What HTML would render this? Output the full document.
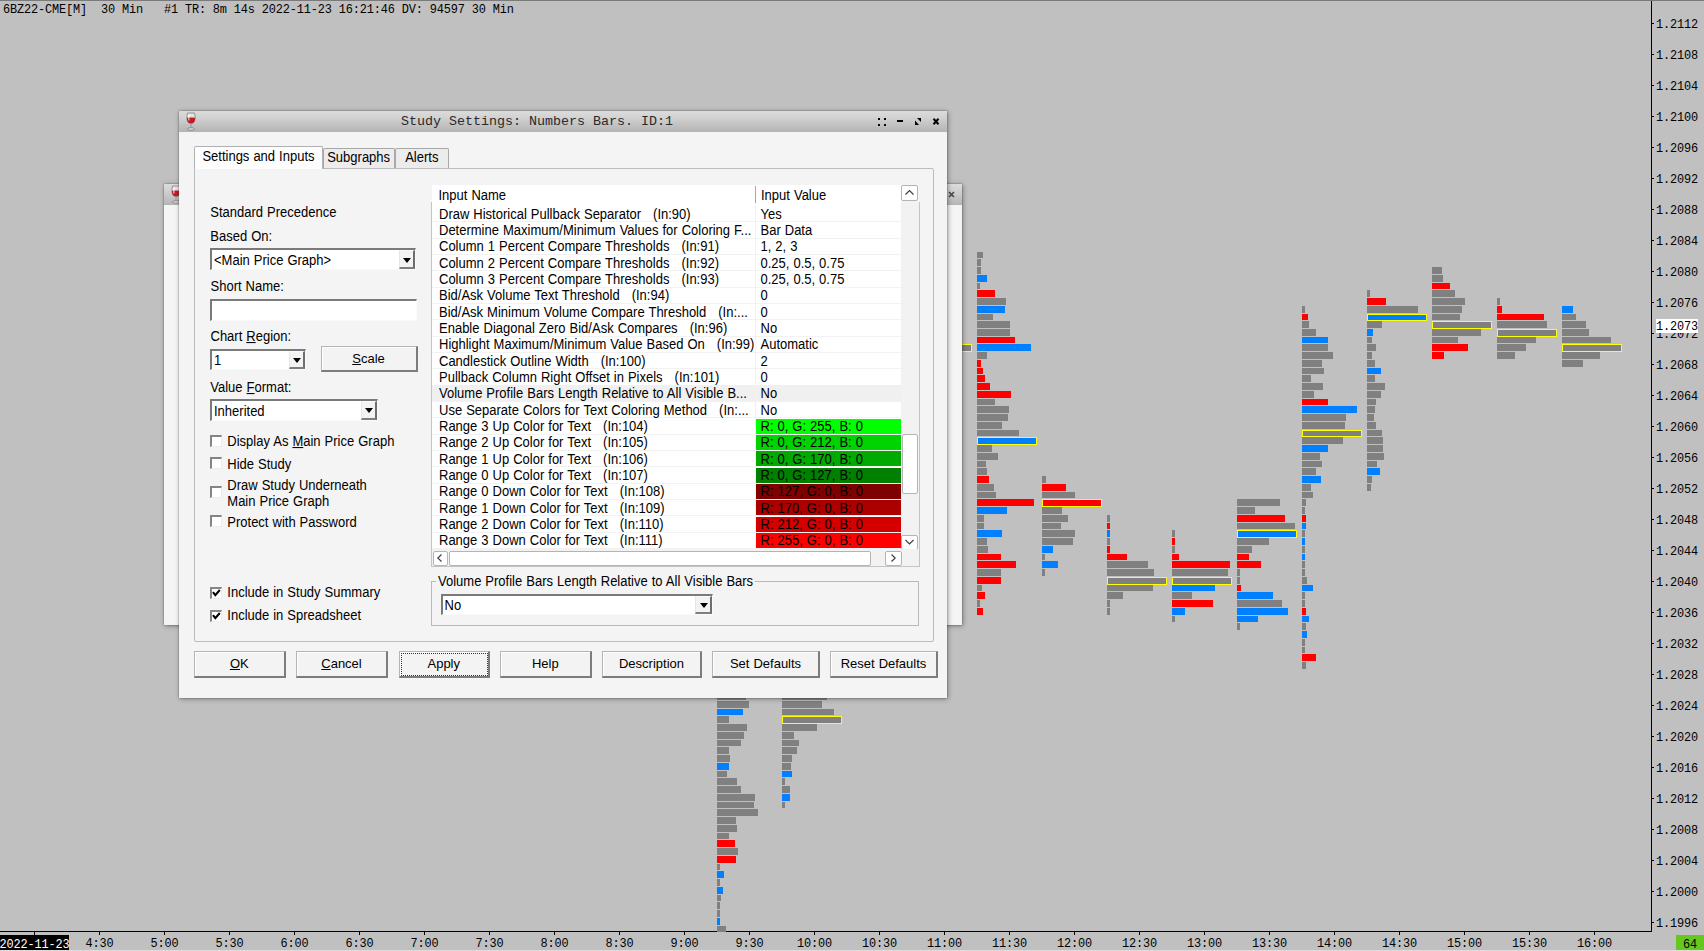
<!DOCTYPE html><html><head><meta charset="utf-8"><style>
*{margin:0;padding:0;box-sizing:border-box}
html,body{width:1704px;height:951px;overflow:hidden;background:#c0c0c0;position:relative}
body{font-family:"Liberation Sans",sans-serif;font-size:13px;color:#000;word-spacing:0.4px}
.mono,.status,.pl,.tl{word-spacing:0}
.a{position:absolute}
.mono{font-family:"Liberation Mono",monospace}
.status{position:absolute;left:3px;top:3px;font-family:"Liberation Mono",monospace;font-size:11.9px;letter-spacing:-0.14px;line-height:14px;white-space:pre;color:#000}
.vax{position:absolute;left:1651px;top:1px;width:1px;height:931px;background:#000}
.hax{position:absolute;left:0;top:931px;width:1652px;height:1px;background:#000}
.tk{position:absolute;left:1652px;width:2px;height:1px;background:#000}
.pl{position:absolute;left:1656px;font-family:"Liberation Mono",monospace;font-size:11.9px;letter-spacing:-0.14px;line-height:14px;white-space:pre;color:#000}
.bt{position:absolute;top:932px;width:1px;height:3px;background:#000}
.tl{position:absolute;top:937px;width:60px;text-align:center;font-family:"Liberation Mono",monospace;font-size:11.9px;letter-spacing:-0.14px;line-height:14px;color:#000}
.bar{position:absolute;height:6px}
.g{background:#808080}.r{background:#ff0000}.b{background:#0080ff}
.y{border:1px solid #ffff00}
/* dialog */
.win{position:absolute;background:#f4f4f4;box-shadow:0 0 1.5px rgba(0,0,0,.45),1px 1px 5px rgba(0,0,0,.35)}
.tbar{position:absolute;left:0;top:0;right:0;height:21px;background:linear-gradient(#dcdcdc,#d2d2d2 30%,#b4b4b4)}
.ttl{position:absolute;left:0;right:0;top:2px;text-align:center;font-family:"Liberation Mono",monospace;font-size:13.33px;line-height:16px;color:#333;white-space:pre}
.tab{position:absolute;border:1px solid #a8a8a8;border-bottom:none;border-radius:2px 2px 0 0;background:#ececec;line-height:16px;text-align:center;white-space:nowrap}
.panel{position:absolute;border:1px solid #bcbcbc;border-radius:0 2px 2px 2px;background:#f4f4f4}
.lbl{position:absolute;white-space:nowrap;line-height:16px;transform:scaleY(1.06);transform-origin:0 12.5px}
.combo{position:absolute;background:#fff;border-top:2px solid #7a7a7a;border-left:2px solid #7a7a7a;border-right:1px solid #fafafa;border-bottom:1px solid #fafafa}
.combo .txt{position:absolute;left:2px;top:0;line-height:18px;white-space:nowrap}
.dd{position:absolute;top:0;bottom:0;right:0;width:16px;background:#f0f0f0;border-left:1px solid #a0a0a0;border-bottom:1px solid #808080}
.dd:after{content:"";position:absolute;left:4px;top:8px;border-left:4px solid transparent;border-right:4px solid transparent;border-top:5px solid #000}
.edit{position:absolute;background:#fff;border:1px solid #bbb;border-top:2px solid #707070;border-left:2px solid #707070}
.btn{position:absolute;background:#f3f3f3;border:1px solid #b4b4b4;border-right:2px solid #7c7c7c;border-bottom:2px solid #7c7c7c;box-shadow:inset 1px 1px 0 #fff;text-align:center;white-space:nowrap}
.chk{position:absolute;width:12px;height:12px;background:#fff;border-top:2px solid #858585;border-left:2px solid #858585;border-right:1px solid #ececec;border-bottom:1px solid #ececec}
.list{position:absolute;background:#fff}
.row{position:absolute;left:0;height:16.33px;white-space:nowrap;border-bottom:1px solid #f2f2f2}
.row .n{position:absolute;left:7px;top:0;line-height:16px}
.row .v{position:absolute;left:329px;top:0;line-height:16px}
.cell{position:absolute;left:325px;width:146px;top:0;height:15.33px}
u{text-decoration:underline}
.ddb{position:absolute;background:#f3f3f3;border-left:1px solid #e6e6e6;border-top:1px solid #fafafa;border-right:2px solid #6e6e6e;border-bottom:2px solid #7e7e7e}
.arr{position:absolute;width:0;height:0;border-left:4px solid transparent;border-right:4px solid transparent;border-top:5px solid #000}
.sbb{position:absolute;background:#fff;border:1px solid #b4b4b4;border-radius:2px}

</style></head><body>
<div class="a" style="left:0;top:0;width:1704px;height:1px;background:#7a7a7a"></div>
<div class="status">6BZ22-CME[M]  30 Min   #1 TR: 8m 14s 2022-11-23 16:21:46 DV: 94597 30 Min</div>
<div class="vax"></div><div class="hax"></div>
<div class="tk" style="top:22.8px"></div><div class="pl" style="top:17.8px">1.2112</div>
<div class="tk" style="top:53.8px"></div><div class="pl" style="top:48.8px">1.2108</div>
<div class="tk" style="top:84.8px"></div><div class="pl" style="top:79.8px">1.2104</div>
<div class="tk" style="top:115.8px"></div><div class="pl" style="top:110.8px">1.2100</div>
<div class="tk" style="top:146.8px"></div><div class="pl" style="top:141.8px">1.2096</div>
<div class="tk" style="top:177.8px"></div><div class="pl" style="top:172.8px">1.2092</div>
<div class="tk" style="top:208.7px"></div><div class="pl" style="top:203.7px">1.2088</div>
<div class="tk" style="top:239.7px"></div><div class="pl" style="top:234.7px">1.2084</div>
<div class="tk" style="top:270.7px"></div><div class="pl" style="top:265.7px">1.2080</div>
<div class="tk" style="top:301.7px"></div><div class="pl" style="top:296.7px">1.2076</div>
<div class="tk" style="top:332.7px"></div><div class="pl" style="top:327.7px">1.2072</div>
<div class="tk" style="top:363.7px"></div><div class="pl" style="top:358.7px">1.2068</div>
<div class="tk" style="top:394.7px"></div><div class="pl" style="top:389.7px">1.2064</div>
<div class="tk" style="top:425.7px"></div><div class="pl" style="top:420.7px">1.2060</div>
<div class="tk" style="top:456.7px"></div><div class="pl" style="top:451.7px">1.2056</div>
<div class="tk" style="top:487.6px"></div><div class="pl" style="top:482.6px">1.2052</div>
<div class="tk" style="top:518.6px"></div><div class="pl" style="top:513.6px">1.2048</div>
<div class="tk" style="top:549.6px"></div><div class="pl" style="top:544.6px">1.2044</div>
<div class="tk" style="top:580.6px"></div><div class="pl" style="top:575.6px">1.2040</div>
<div class="tk" style="top:611.6px"></div><div class="pl" style="top:606.6px">1.2036</div>
<div class="tk" style="top:642.6px"></div><div class="pl" style="top:637.6px">1.2032</div>
<div class="tk" style="top:673.6px"></div><div class="pl" style="top:668.6px">1.2028</div>
<div class="tk" style="top:704.6px"></div><div class="pl" style="top:699.6px">1.2024</div>
<div class="tk" style="top:735.6px"></div><div class="pl" style="top:730.6px">1.2020</div>
<div class="tk" style="top:766.6px"></div><div class="pl" style="top:761.6px">1.2016</div>
<div class="tk" style="top:797.5px"></div><div class="pl" style="top:792.5px">1.2012</div>
<div class="tk" style="top:828.5px"></div><div class="pl" style="top:823.5px">1.2008</div>
<div class="tk" style="top:859.5px"></div><div class="pl" style="top:854.5px">1.2004</div>
<div class="tk" style="top:890.5px"></div><div class="pl" style="top:885.5px">1.2000</div>
<div class="tk" style="top:921.5px"></div><div class="pl" style="top:916.5px">1.1996</div>
<div class="bt" style="left:34px"></div>
<div class="bt" style="left:99.0px"></div><div class="tl" style="left:69.5px">4:30</div>
<div class="bt" style="left:164.0px"></div><div class="tl" style="left:134.5px">5:00</div>
<div class="bt" style="left:229.0px"></div><div class="tl" style="left:199.5px">5:30</div>
<div class="bt" style="left:294.0px"></div><div class="tl" style="left:264.5px">6:00</div>
<div class="bt" style="left:359.0px"></div><div class="tl" style="left:329.5px">6:30</div>
<div class="bt" style="left:424.0px"></div><div class="tl" style="left:394.5px">7:00</div>
<div class="bt" style="left:489.0px"></div><div class="tl" style="left:459.5px">7:30</div>
<div class="bt" style="left:554.0px"></div><div class="tl" style="left:524.5px">8:00</div>
<div class="bt" style="left:619.0px"></div><div class="tl" style="left:589.5px">8:30</div>
<div class="bt" style="left:684.0px"></div><div class="tl" style="left:654.5px">9:00</div>
<div class="bt" style="left:749.0px"></div><div class="tl" style="left:719.5px">9:30</div>
<div class="bt" style="left:814.0px"></div><div class="tl" style="left:784.5px">10:00</div>
<div class="bt" style="left:879.0px"></div><div class="tl" style="left:849.5px">10:30</div>
<div class="bt" style="left:944.0px"></div><div class="tl" style="left:914.5px">11:00</div>
<div class="bt" style="left:1009.0px"></div><div class="tl" style="left:979.5px">11:30</div>
<div class="bt" style="left:1074.0px"></div><div class="tl" style="left:1044.5px">12:00</div>
<div class="bt" style="left:1139.0px"></div><div class="tl" style="left:1109.5px">12:30</div>
<div class="bt" style="left:1204.0px"></div><div class="tl" style="left:1174.5px">13:00</div>
<div class="bt" style="left:1269.0px"></div><div class="tl" style="left:1239.5px">13:30</div>
<div class="bt" style="left:1334.0px"></div><div class="tl" style="left:1304.5px">14:00</div>
<div class="bt" style="left:1399.0px"></div><div class="tl" style="left:1369.5px">14:30</div>
<div class="bt" style="left:1464.0px"></div><div class="tl" style="left:1434.5px">15:00</div>
<div class="bt" style="left:1529.0px"></div><div class="tl" style="left:1499.5px">15:30</div>
<div class="bt" style="left:1594.0px"></div><div class="tl" style="left:1564.5px">16:00</div>
<div class="a" style="left:0;top:935px;width:69px;height:14.5px;background:#000"></div><div class="a mono" style="left:-0.5px;top:937.5px;color:#fff;font-size:11.9px;letter-spacing:-0.14px;line-height:14px;white-space:pre">2022-11-23</div>
<div class="a" style="left:1656px;top:319px;width:42px;height:14px;background:#fff"></div><div class="a mono" style="left:1656px;top:320px;font-size:11.9px;letter-spacing:-0.14px;line-height:14px">1.2073</div>
<div class="a" style="left:1676px;top:935px;width:28px;height:14.5px;background:#66c81e"></div><div class="a mono" style="left:1676px;top:937.5px;width:28px;font-size:11.9px;letter-spacing:-0.14px;line-height:14px;text-align:center">64</div>
<div class="a" style="left:0;top:950px;width:1704px;height:1px;background:#dcdcdc"></div>
<div class="bar g" style="left:977px;top:252px;width:6px;height:6px"></div>
<div class="bar g" style="left:977px;top:259px;width:4px;height:7px"></div>
<div class="bar g" style="left:977px;top:267px;width:4px;height:7px"></div>
<div class="bar b" style="left:977px;top:275px;width:10px;height:7px"></div>
<div class="bar g" style="left:977px;top:283px;width:3px;height:6px"></div>
<div class="bar r" style="left:977px;top:290px;width:18px;height:7px"></div>
<div class="bar g" style="left:977px;top:298px;width:29px;height:7px"></div>
<div class="bar b" style="left:977px;top:306px;width:28px;height:7px"></div>
<div class="bar g" style="left:977px;top:314px;width:16px;height:6px"></div>
<div class="bar g" style="left:977px;top:321px;width:33px;height:7px"></div>
<div class="bar g" style="left:977px;top:329px;width:33px;height:7px"></div>
<div class="bar r" style="left:977px;top:337px;width:38px;height:6px"></div>
<div class="bar b" style="left:977px;top:344px;width:54px;height:7px"></div>
<div class="bar g" style="left:977px;top:352px;width:10px;height:7px"></div>
<div class="bar r" style="left:977px;top:360px;width:4px;height:7px"></div>
<div class="bar r" style="left:977px;top:368px;width:6px;height:6px"></div>
<div class="bar r" style="left:977px;top:375px;width:8px;height:7px"></div>
<div class="bar r" style="left:977px;top:383px;width:13px;height:7px"></div>
<div class="bar r" style="left:977px;top:391px;width:34px;height:7px"></div>
<div class="bar g" style="left:977px;top:399px;width:18px;height:6px"></div>
<div class="bar g" style="left:977px;top:406px;width:32px;height:7px"></div>
<div class="bar g" style="left:977px;top:414px;width:31px;height:7px"></div>
<div class="bar g" style="left:977px;top:422px;width:25px;height:7px"></div>
<div class="bar g" style="left:977px;top:430px;width:42px;height:6px"></div>
<div class="bar b y" style="left:977px;top:437px;width:60px;height:8px"></div>
<div class="bar g" style="left:977px;top:445px;width:15px;height:7px"></div>
<div class="bar g" style="left:977px;top:453px;width:21px;height:7px"></div>
<div class="bar g" style="left:977px;top:461px;width:9px;height:6px"></div>
<div class="bar g" style="left:977px;top:468px;width:10px;height:7px"></div>
<div class="bar r" style="left:977px;top:476px;width:12px;height:7px"></div>
<div class="bar g" style="left:977px;top:484px;width:17px;height:7px"></div>
<div class="bar g" style="left:977px;top:492px;width:19px;height:6px"></div>
<div class="bar r" style="left:977px;top:499px;width:57px;height:7px"></div>
<div class="bar b" style="left:977px;top:507px;width:30px;height:7px"></div>
<div class="bar g" style="left:977px;top:515px;width:7px;height:7px"></div>
<div class="bar g" style="left:977px;top:523px;width:7px;height:6px"></div>
<div class="bar b" style="left:977px;top:530px;width:25px;height:7px"></div>
<div class="bar g" style="left:977px;top:538px;width:10px;height:7px"></div>
<div class="bar g" style="left:977px;top:546px;width:11px;height:7px"></div>
<div class="bar r" style="left:977px;top:554px;width:24px;height:6px"></div>
<div class="bar r" style="left:977px;top:561px;width:39px;height:7px"></div>
<div class="bar g" style="left:977px;top:569px;width:24px;height:7px"></div>
<div class="bar r" style="left:977px;top:577px;width:24px;height:7px"></div>
<div class="bar g" style="left:977px;top:585px;width:5px;height:6px"></div>
<div class="bar r" style="left:977px;top:592px;width:8px;height:7px"></div>
<div class="bar g" style="left:977px;top:600px;width:3px;height:7px"></div>
<div class="bar r" style="left:977px;top:608px;width:6px;height:7px"></div>
<div class="bar g" style="left:1042px;top:476px;width:4px;height:7px"></div>
<div class="bar r" style="left:1042px;top:484px;width:24px;height:7px"></div>
<div class="bar g" style="left:1042px;top:492px;width:33px;height:6px"></div>
<div class="bar r y" style="left:1042px;top:499px;width:60px;height:8px"></div>
<div class="bar g" style="left:1042px;top:507px;width:20px;height:7px"></div>
<div class="bar g" style="left:1042px;top:515px;width:26px;height:7px"></div>
<div class="bar g" style="left:1042px;top:523px;width:19px;height:6px"></div>
<div class="bar g" style="left:1042px;top:530px;width:33px;height:7px"></div>
<div class="bar g" style="left:1042px;top:538px;width:31px;height:7px"></div>
<div class="bar b" style="left:1042px;top:546px;width:11px;height:7px"></div>
<div class="bar g" style="left:1042px;top:554px;width:3px;height:6px"></div>
<div class="bar b" style="left:1042px;top:561px;width:16px;height:7px"></div>
<div class="bar g" style="left:1042px;top:569px;width:3px;height:7px"></div>
<div class="bar g" style="left:1107px;top:515px;width:3px;height:7px"></div>
<div class="bar r" style="left:1107px;top:523px;width:3px;height:6px"></div>
<div class="bar b" style="left:1107px;top:530px;width:3px;height:7px"></div>
<div class="bar g" style="left:1107px;top:538px;width:3px;height:7px"></div>
<div class="bar r" style="left:1107px;top:546px;width:3px;height:7px"></div>
<div class="bar r" style="left:1107px;top:554px;width:20px;height:6px"></div>
<div class="bar g" style="left:1107px;top:561px;width:41px;height:7px"></div>
<div class="bar g" style="left:1107px;top:569px;width:47px;height:7px"></div>
<div class="bar g y" style="left:1107px;top:577px;width:60px;height:8px"></div>
<div class="bar g" style="left:1107px;top:585px;width:46px;height:6px"></div>
<div class="bar g" style="left:1107px;top:592px;width:16px;height:7px"></div>
<div class="bar g" style="left:1107px;top:600px;width:3px;height:7px"></div>
<div class="bar g" style="left:1107px;top:608px;width:3px;height:7px"></div>
<div class="bar g" style="left:1172px;top:530px;width:3px;height:7px"></div>
<div class="bar r" style="left:1172px;top:538px;width:3px;height:7px"></div>
<div class="bar g" style="left:1172px;top:546px;width:3px;height:7px"></div>
<div class="bar r" style="left:1172px;top:554px;width:7px;height:6px"></div>
<div class="bar r" style="left:1172px;top:561px;width:58px;height:7px"></div>
<div class="bar g" style="left:1172px;top:569px;width:56px;height:7px"></div>
<div class="bar g y" style="left:1172px;top:577px;width:60px;height:8px"></div>
<div class="bar b" style="left:1172px;top:585px;width:43px;height:6px"></div>
<div class="bar g" style="left:1172px;top:592px;width:20px;height:7px"></div>
<div class="bar r" style="left:1172px;top:600px;width:41px;height:7px"></div>
<div class="bar b" style="left:1172px;top:608px;width:13px;height:7px"></div>
<div class="bar g" style="left:1172px;top:616px;width:3px;height:6px"></div>
<div class="bar g" style="left:1237px;top:499px;width:43px;height:7px"></div>
<div class="bar g" style="left:1237px;top:507px;width:18px;height:7px"></div>
<div class="bar r" style="left:1237px;top:515px;width:48px;height:7px"></div>
<div class="bar g" style="left:1237px;top:523px;width:58px;height:6px"></div>
<div class="bar b y" style="left:1237px;top:530px;width:60px;height:8px"></div>
<div class="bar g" style="left:1237px;top:538px;width:32px;height:7px"></div>
<div class="bar g" style="left:1237px;top:546px;width:15px;height:7px"></div>
<div class="bar r" style="left:1237px;top:554px;width:12px;height:6px"></div>
<div class="bar r" style="left:1237px;top:561px;width:24px;height:7px"></div>
<div class="bar g" style="left:1237px;top:569px;width:3px;height:7px"></div>
<div class="bar g" style="left:1237px;top:577px;width:3px;height:7px"></div>
<div class="bar r" style="left:1237px;top:585px;width:4px;height:6px"></div>
<div class="bar b" style="left:1237px;top:592px;width:36px;height:7px"></div>
<div class="bar g" style="left:1237px;top:600px;width:45px;height:7px"></div>
<div class="bar b" style="left:1237px;top:608px;width:51px;height:7px"></div>
<div class="bar b" style="left:1237px;top:616px;width:21px;height:6px"></div>
<div class="bar g" style="left:1237px;top:623px;width:3px;height:7px"></div>
<div class="bar g" style="left:1302px;top:306px;width:3px;height:7px"></div>
<div class="bar r" style="left:1302px;top:314px;width:6px;height:6px"></div>
<div class="bar g" style="left:1302px;top:321px;width:7px;height:7px"></div>
<div class="bar g" style="left:1302px;top:329px;width:14px;height:7px"></div>
<div class="bar b" style="left:1302px;top:337px;width:26px;height:6px"></div>
<div class="bar g" style="left:1302px;top:344px;width:26px;height:7px"></div>
<div class="bar g" style="left:1302px;top:352px;width:31px;height:7px"></div>
<div class="bar g" style="left:1302px;top:360px;width:20px;height:7px"></div>
<div class="bar g" style="left:1302px;top:368px;width:22px;height:6px"></div>
<div class="bar g" style="left:1302px;top:375px;width:9px;height:7px"></div>
<div class="bar g" style="left:1302px;top:383px;width:21px;height:7px"></div>
<div class="bar g" style="left:1302px;top:391px;width:12px;height:7px"></div>
<div class="bar r" style="left:1302px;top:399px;width:26px;height:6px"></div>
<div class="bar b" style="left:1302px;top:406px;width:55px;height:7px"></div>
<div class="bar g" style="left:1302px;top:414px;width:44px;height:7px"></div>
<div class="bar g" style="left:1302px;top:422px;width:43px;height:7px"></div>
<div class="bar g y" style="left:1302px;top:430px;width:60px;height:7px"></div>
<div class="bar g" style="left:1302px;top:437px;width:41px;height:7px"></div>
<div class="bar b" style="left:1302px;top:445px;width:26px;height:7px"></div>
<div class="bar g" style="left:1302px;top:453px;width:18px;height:7px"></div>
<div class="bar g" style="left:1302px;top:461px;width:20px;height:6px"></div>
<div class="bar g" style="left:1302px;top:468px;width:14px;height:7px"></div>
<div class="bar b" style="left:1302px;top:476px;width:19px;height:7px"></div>
<div class="bar g" style="left:1302px;top:484px;width:9px;height:7px"></div>
<div class="bar g" style="left:1302px;top:492px;width:11px;height:6px"></div>
<div class="bar g" style="left:1302px;top:499px;width:4px;height:7px"></div>
<div class="bar g" style="left:1302px;top:507px;width:3px;height:7px"></div>
<div class="bar r" style="left:1302px;top:515px;width:4px;height:7px"></div>
<div class="bar b" style="left:1302px;top:523px;width:4px;height:6px"></div>
<div class="bar g" style="left:1302px;top:530px;width:3px;height:7px"></div>
<div class="bar b" style="left:1302px;top:538px;width:3px;height:7px"></div>
<div class="bar g" style="left:1302px;top:546px;width:3px;height:7px"></div>
<div class="bar b" style="left:1302px;top:554px;width:3px;height:6px"></div>
<div class="bar g" style="left:1302px;top:561px;width:3px;height:7px"></div>
<div class="bar g" style="left:1302px;top:569px;width:3px;height:7px"></div>
<div class="bar g" style="left:1302px;top:577px;width:5px;height:7px"></div>
<div class="bar b" style="left:1302px;top:585px;width:11px;height:6px"></div>
<div class="bar g" style="left:1302px;top:592px;width:3px;height:7px"></div>
<div class="bar g" style="left:1302px;top:600px;width:3px;height:7px"></div>
<div class="bar r" style="left:1302px;top:608px;width:4px;height:7px"></div>
<div class="bar b" style="left:1302px;top:616px;width:7px;height:6px"></div>
<div class="bar g" style="left:1302px;top:623px;width:4px;height:7px"></div>
<div class="bar b" style="left:1302px;top:631px;width:5px;height:7px"></div>
<div class="bar g" style="left:1302px;top:639px;width:3px;height:7px"></div>
<div class="bar g" style="left:1302px;top:647px;width:3px;height:6px"></div>
<div class="bar r" style="left:1302px;top:654px;width:14px;height:7px"></div>
<div class="bar g" style="left:1302px;top:662px;width:4px;height:7px"></div>
<div class="bar g" style="left:1367px;top:290px;width:3px;height:7px"></div>
<div class="bar r" style="left:1367px;top:298px;width:19px;height:7px"></div>
<div class="bar g" style="left:1367px;top:306px;width:51px;height:7px"></div>
<div class="bar b y" style="left:1367px;top:314px;width:60px;height:7px"></div>
<div class="bar g" style="left:1367px;top:321px;width:15px;height:7px"></div>
<div class="bar b" style="left:1367px;top:329px;width:6px;height:7px"></div>
<div class="bar g" style="left:1367px;top:337px;width:5px;height:6px"></div>
<div class="bar g" style="left:1367px;top:344px;width:9px;height:7px"></div>
<div class="bar g" style="left:1367px;top:352px;width:5px;height:7px"></div>
<div class="bar g" style="left:1367px;top:360px;width:8px;height:7px"></div>
<div class="bar b" style="left:1367px;top:368px;width:14px;height:6px"></div>
<div class="bar g" style="left:1367px;top:375px;width:8px;height:7px"></div>
<div class="bar g" style="left:1367px;top:383px;width:18px;height:7px"></div>
<div class="bar g" style="left:1367px;top:391px;width:14px;height:7px"></div>
<div class="bar g" style="left:1367px;top:399px;width:9px;height:6px"></div>
<div class="bar g" style="left:1367px;top:406px;width:8px;height:7px"></div>
<div class="bar g" style="left:1367px;top:414px;width:7px;height:7px"></div>
<div class="bar g" style="left:1367px;top:422px;width:9px;height:7px"></div>
<div class="bar g" style="left:1367px;top:430px;width:15px;height:6px"></div>
<div class="bar g" style="left:1367px;top:437px;width:16px;height:7px"></div>
<div class="bar g" style="left:1367px;top:445px;width:16px;height:7px"></div>
<div class="bar g" style="left:1367px;top:453px;width:17px;height:7px"></div>
<div class="bar g" style="left:1367px;top:461px;width:10px;height:6px"></div>
<div class="bar b" style="left:1367px;top:468px;width:13px;height:7px"></div>
<div class="bar g" style="left:1367px;top:476px;width:5px;height:7px"></div>
<div class="bar g" style="left:1367px;top:484px;width:4px;height:7px"></div>
<div class="bar g" style="left:1432px;top:267px;width:10px;height:7px"></div>
<div class="bar g" style="left:1432px;top:275px;width:11px;height:7px"></div>
<div class="bar r" style="left:1432px;top:283px;width:18px;height:6px"></div>
<div class="bar g" style="left:1432px;top:290px;width:23px;height:7px"></div>
<div class="bar g" style="left:1432px;top:298px;width:33px;height:7px"></div>
<div class="bar g" style="left:1432px;top:306px;width:30px;height:7px"></div>
<div class="bar g" style="left:1432px;top:314px;width:28px;height:6px"></div>
<div class="bar g y" style="left:1432px;top:321px;width:60px;height:8px"></div>
<div class="bar g" style="left:1432px;top:329px;width:49px;height:7px"></div>
<div class="bar g" style="left:1432px;top:337px;width:26px;height:6px"></div>
<div class="bar r" style="left:1432px;top:344px;width:36px;height:7px"></div>
<div class="bar r" style="left:1432px;top:352px;width:12px;height:7px"></div>
<div class="bar g" style="left:1497px;top:298px;width:3px;height:7px"></div>
<div class="bar r" style="left:1497px;top:306px;width:5px;height:7px"></div>
<div class="bar r" style="left:1497px;top:314px;width:47px;height:6px"></div>
<div class="bar g" style="left:1497px;top:321px;width:50px;height:7px"></div>
<div class="bar g y" style="left:1497px;top:329px;width:60px;height:8px"></div>
<div class="bar g" style="left:1497px;top:337px;width:39px;height:6px"></div>
<div class="bar g" style="left:1497px;top:344px;width:29px;height:7px"></div>
<div class="bar g" style="left:1497px;top:352px;width:18px;height:7px"></div>
<div class="bar b" style="left:1562px;top:306px;width:11px;height:7px"></div>
<div class="bar g" style="left:1562px;top:314px;width:14px;height:6px"></div>
<div class="bar g" style="left:1562px;top:321px;width:24px;height:7px"></div>
<div class="bar g" style="left:1562px;top:329px;width:27px;height:7px"></div>
<div class="bar g" style="left:1562px;top:337px;width:49px;height:6px"></div>
<div class="bar g y" style="left:1562px;top:344px;width:60px;height:8px"></div>
<div class="bar g" style="left:1562px;top:352px;width:38px;height:7px"></div>
<div class="bar g" style="left:1562px;top:360px;width:21px;height:7px"></div>
<div class="bar g" style="left:717px;top:693px;width:29px;height:7px"></div>
<div class="bar g" style="left:717px;top:701px;width:32px;height:7px"></div>
<div class="bar b" style="left:717px;top:709px;width:26px;height:6px"></div>
<div class="bar g" style="left:717px;top:716px;width:12px;height:7px"></div>
<div class="bar g" style="left:717px;top:724px;width:30px;height:7px"></div>
<div class="bar g" style="left:717px;top:732px;width:27px;height:7px"></div>
<div class="bar g" style="left:717px;top:740px;width:24px;height:6px"></div>
<div class="bar g" style="left:717px;top:747px;width:12px;height:7px"></div>
<div class="bar g" style="left:717px;top:755px;width:13px;height:7px"></div>
<div class="bar b" style="left:717px;top:763px;width:12px;height:7px"></div>
<div class="bar g" style="left:717px;top:771px;width:10px;height:6px"></div>
<div class="bar g" style="left:717px;top:778px;width:20px;height:7px"></div>
<div class="bar g" style="left:717px;top:786px;width:24px;height:7px"></div>
<div class="bar g" style="left:717px;top:794px;width:38px;height:7px"></div>
<div class="bar g" style="left:717px;top:802px;width:37px;height:6px"></div>
<div class="bar g" style="left:717px;top:809px;width:41px;height:7px"></div>
<div class="bar g" style="left:717px;top:817px;width:19px;height:7px"></div>
<div class="bar g" style="left:717px;top:825px;width:20px;height:7px"></div>
<div class="bar g" style="left:717px;top:833px;width:12px;height:6px"></div>
<div class="bar r" style="left:717px;top:840px;width:18px;height:7px"></div>
<div class="bar g" style="left:717px;top:848px;width:21px;height:7px"></div>
<div class="bar r" style="left:717px;top:856px;width:19px;height:7px"></div>
<div class="bar g" style="left:717px;top:864px;width:3px;height:6px"></div>
<div class="bar b" style="left:717px;top:871px;width:7px;height:7px"></div>
<div class="bar g" style="left:717px;top:879px;width:3px;height:7px"></div>
<div class="bar b" style="left:717px;top:887px;width:6px;height:7px"></div>
<div class="bar g" style="left:717px;top:895px;width:4px;height:6px"></div>
<div class="bar g" style="left:717px;top:902px;width:3px;height:7px"></div>
<div class="bar g" style="left:717px;top:910px;width:3px;height:7px"></div>
<div class="bar b" style="left:717px;top:918px;width:3px;height:7px"></div>
<div class="bar g" style="left:717px;top:926px;width:9px;height:6px"></div>
<div class="bar g" style="left:782px;top:693px;width:45px;height:7px"></div>
<div class="bar g" style="left:782px;top:701px;width:40px;height:7px"></div>
<div class="bar g" style="left:782px;top:709px;width:52px;height:6px"></div>
<div class="bar g y" style="left:782px;top:716px;width:60px;height:8px"></div>
<div class="bar g" style="left:782px;top:724px;width:35px;height:7px"></div>
<div class="bar g" style="left:782px;top:732px;width:12px;height:7px"></div>
<div class="bar g" style="left:782px;top:740px;width:17px;height:6px"></div>
<div class="bar g" style="left:782px;top:747px;width:15px;height:7px"></div>
<div class="bar g" style="left:782px;top:755px;width:10px;height:7px"></div>
<div class="bar g" style="left:782px;top:763px;width:9px;height:7px"></div>
<div class="bar b" style="left:782px;top:771px;width:10px;height:6px"></div>
<div class="bar g" style="left:782px;top:778px;width:3px;height:7px"></div>
<div class="bar g" style="left:782px;top:786px;width:8px;height:7px"></div>
<div class="bar b" style="left:782px;top:794px;width:8px;height:7px"></div>
<div class="bar g" style="left:782px;top:802px;width:3px;height:6px"></div>
<div class="bar g y" style="left:912px;top:344px;width:60px;height:8px"></div>
<div class="win" style="left:164px;top:183.5px;width:798px;height:441px"><div class="tbar"></div></div>
<svg class="a" style="left:170px;top:185px" width="12" height="19" viewBox="0 0 12 19">
<path d="M2.5 1L9.5 1C10.2 4 10.5 7 9.6 9C8.8 10.8 7.5 11.5 6 11.5C4.5 11.5 3.2 10.8 2.4 9C1.5 7 1.8 4 2.5 1Z" fill="#e4e4e4" stroke="#8a8a8a" stroke-width="0.9"/>
<path d="M2 5.8C4 5.4 8 5.4 10.1 5.8C10.2 7 10 8 9.6 9C8.8 10.8 7.5 11.5 6 11.5C4.5 11.5 3.2 10.8 2.4 9C2 8 1.9 7 2 5.8Z" fill="#c01c26"/>
<rect x="3" y="2.5" width="1.6" height="6" fill="#fff" opacity="0.55"/>
<rect x="5.4" y="11.3" width="1.2" height="4.5" fill="#9aa0a0"/>
<ellipse cx="6" cy="17" rx="3.8" ry="1.3" fill="#d8d8d8" stroke="#8a8a8a" stroke-width="0.9"/>
</svg>
<svg class="a" style="left:946.5px;top:190px" width="9" height="9" viewBox="0 0 9 9"><path d="M2 2L7 7M7 2L2 7" stroke="#4a4a4a" stroke-width="1.7"/></svg>
<div class="win" style="left:179px;top:111px;width:768px;height:587px">
<div class="tbar"></div>
</div>
<div class="a mono" style="left:401px;top:114px;font-size:13.33px;line-height:16px;color:#2a2a2a;white-space:pre">Study Settings: Numbers Bars. ID:1</div>
<svg class="a" style="left:185px;top:112px" width="12" height="19" viewBox="0 0 12 19">
<path d="M2.5 1L9.5 1C10.2 4 10.5 7 9.6 9C8.8 10.8 7.5 11.5 6 11.5C4.5 11.5 3.2 10.8 2.4 9C1.5 7 1.8 4 2.5 1Z" fill="#e4e4e4" stroke="#8a8a8a" stroke-width="0.9"/>
<path d="M2 5.8C4 5.4 8 5.4 10.1 5.8C10.2 7 10 8 9.6 9C8.8 10.8 7.5 11.5 6 11.5C4.5 11.5 3.2 10.8 2.4 9C2 8 1.9 7 2 5.8Z" fill="#c01c26"/>
<rect x="3" y="2.5" width="1.6" height="6" fill="#fff" opacity="0.55"/>
<rect x="5.4" y="11.3" width="1.2" height="4.5" fill="#9aa0a0"/>
<ellipse cx="6" cy="17" rx="3.8" ry="1.3" fill="#d8d8d8" stroke="#8a8a8a" stroke-width="0.9"/>
</svg>
<div class="a" style="left:878px;top:117.5px;width:2px;height:2px;border-radius:0.3px;background:#000"></div>
<div class="a" style="left:878px;top:123.5px;width:2px;height:2px;border-radius:0.3px;background:#000"></div>
<div class="a" style="left:884px;top:117.5px;width:2px;height:2px;border-radius:0.3px;background:#000"></div>
<div class="a" style="left:884px;top:123.5px;width:2px;height:2px;border-radius:0.3px;background:#000"></div>
<div class="a" style="left:897px;top:120.2px;width:6px;height:2px;background:#000"></div>
<svg class="a" style="left:914px;top:117px" width="8" height="9" viewBox="0 0 8 9"><path d="M3 1H7V5z M1 3.5V8H5z" fill="#000"/></svg>
<svg class="a" style="left:932px;top:117px" width="8" height="9" viewBox="0 0 8 9"><path d="M1.5 1.8L6.5 7.2M6.5 1.8L1.5 7.2" stroke="#000" stroke-width="2"/></svg>
<div class="panel" style="left:194px;top:167.5px;width:740px;height:474px"></div>
<div class="tab" style="left:322.5px;top:147.5px;width:72px;height:20.5px;">&nbsp;</div>
<div class="tab" style="left:395px;top:147.5px;width:53.5px;height:20.5px;">&nbsp;</div>
<div class="tab" style="left:194px;top:146px;width:128.5px;height:23px;background:#fdfdfd;border-color:#b0b0b0"></div>
<div class="lbl" style="left:202.4px;top:149px;">Settings and Inputs</div>
<div class="lbl" style="left:327.2px;top:150px;">Subgraphs</div>
<div class="lbl" style="left:405.2px;top:150px;">Alerts</div>
<div class="lbl" style="left:210.3px;top:205px;">Standard Precedence</div>
<div class="lbl" style="left:210.3px;top:229px;">Based On:</div>
<div class="combo" style="left:210px;top:248px;width:206px;height:22px"></div>
<div class="ddb" style="left:398.5px;top:250px;width:16.5px;height:19px"></div>
<div class="arr" style="left:403px;top:257.5px"></div>
<div class="lbl" style="left:214px;top:253.0px">&lt;Main Price Graph&gt;</div>
<div class="lbl" style="left:210.5px;top:279px;">Short Name:</div>
<div class="combo" style="left:210px;top:298.5px;width:206.5px;height:22px"></div>
<div class="lbl" style="left:210.5px;top:329px;">Chart <u>R</u>egion:</div>
<div class="combo" style="left:210px;top:349px;width:96px;height:21px"></div>
<div class="ddb" style="left:288.5px;top:351px;width:16.5px;height:18px"></div>
<div class="arr" style="left:293px;top:358.0px"></div>
<div class="lbl" style="left:214px;top:353.0px">1</div>
<div class="btn" style="left:320.5px;top:345.5px;width:97px;height:26px;line-height:23.5px"><u>S</u>cale</div>
<div class="lbl" style="left:210.3px;top:380px;">Value <u>F</u>ormat:</div>
<div class="combo" style="left:210px;top:398.5px;width:168px;height:22.0px"></div>
<div class="ddb" style="left:360.5px;top:400.5px;width:16.5px;height:19.0px"></div>
<div class="arr" style="left:365px;top:408.0px"></div>
<div class="lbl" style="left:214px;top:403.5px">Inherited</div>
<div class="chk" style="left:210px;top:434.5px"></div>
<div class="lbl" style="left:227.3px;top:434px;">Display As <u>M</u>ain Price Graph</div>
<div class="chk" style="left:210px;top:457.3px"></div>
<div class="lbl" style="left:227.3px;top:457px;">Hide Study</div>
<div class="chk" style="left:210px;top:486px"></div>
<div class="lbl" style="left:227.3px;top:478px;">Draw Study Underneath</div>
<div class="lbl" style="left:227.3px;top:494px;">Main Price Graph</div>
<div class="chk" style="left:210px;top:515.4px"></div>
<div class="lbl" style="left:227.3px;top:515px;">Protect with Password</div>
<div class="chk" style="left:210px;top:586.8px"></div>
<svg class="a" style="left:210px;top:586.8px" width="12" height="12" viewBox="0 0 12 12"><path d="M3 5.2L5.3 8.2L9.8 3" stroke="#000" stroke-width="2.1" fill="none"/></svg>
<div class="lbl" style="left:227.3px;top:585px;">Include in Study Summary</div>
<div class="chk" style="left:210px;top:609.8px"></div>
<svg class="a" style="left:210px;top:609.8px" width="12" height="12" viewBox="0 0 12 12"><path d="M3 5.2L5.3 8.2L9.8 3" stroke="#000" stroke-width="2.1" fill="none"/></svg>
<div class="lbl" style="left:227.3px;top:608px;">Include in Spreadsheet</div>
<div class="btn" style="left:194px;top:651px;width:91.6px;height:27px;line-height:24.5px"><u>O</u>K</div>
<div class="btn" style="left:296px;top:651px;width:92.0px;height:27px;line-height:24.5px"><u>C</u>ancel</div>
<div class="btn" style="left:398.5px;top:651px;width:91.5px;height:27px;line-height:24.5px">Apply</div>
<div class="btn" style="left:500px;top:651px;width:91.7px;height:27px;line-height:24.5px">Help</div>
<div class="btn" style="left:602px;top:651px;width:100.0px;height:27px;line-height:24.5px">Description</div>
<div class="btn" style="left:712px;top:651px;width:108.0px;height:27px;line-height:24.5px">Set Defaults</div>
<div class="btn" style="left:830px;top:651px;width:108.0px;height:27px;line-height:24.5px">Reset Defaults</div>
<div class="a" style="left:401.5px;top:653.5px;width:85.5px;height:21.5px;outline:1px dotted #333"></div>
<div class="a" style="left:430.5px;top:581px;width:488.5px;height:45px;border:1px solid #b9b9b9"></div>
<div class="lbl" style="left:436px;top:573.6px;padding:0 2px;background:#f4f4f4">Volume Profile Bars Length Relative to All Visible Bars</div>
<div class="combo" style="left:440.5px;top:593.5px;width:272.0px;height:21.0px"></div>
<div class="ddb" style="left:695.0px;top:595.5px;width:16.5px;height:18.0px"></div>
<div class="arr" style="left:699.5px;top:602.5px"></div>
<div class="lbl" style="left:444.5px;top:597.5px">No</div>
<div class="a" style="left:430.5px;top:202px;width:489px;height:365px;border:1px solid #c4c4c4;border-top:none;background:#fff"></div>
<div class="a" style="left:432px;top:185px;width:469px;height:18px;background:#fff"></div>
<div class="a" style="left:754.5px;top:185.5px;width:1px;height:18px;background:#a8a8a8"></div>
<div class="lbl" style="left:438.5px;top:187.7px">Input Name</div>
<div class="lbl" style="left:761px;top:187.7px">Input Value</div>
<div class="a" style="left:432px;top:221.40px;width:469px;height:1px;background:#f2f2f2"></div>
<div class="lbl" style="left:439px;top:207px">Draw Historical Pullback Separator&nbsp;&nbsp; (In:90)</div>
<div class="lbl" style="left:760.5px;top:207px">Yes</div>
<div class="a" style="left:432px;top:237.74px;width:469px;height:1px;background:#f2f2f2"></div>
<div class="lbl" style="left:439px;top:223px">Determine Maximum/Minimum Values for Coloring F...</div>
<div class="lbl" style="left:760.5px;top:223px">Bar Data</div>
<div class="a" style="left:432px;top:254.07px;width:469px;height:1px;background:#f2f2f2"></div>
<div class="lbl" style="left:439px;top:239px">Column 1 Percent Compare Thresholds&nbsp;&nbsp; (In:91)</div>
<div class="lbl" style="left:760.5px;top:239px">1, 2, 3</div>
<div class="a" style="left:432px;top:270.40px;width:469px;height:1px;background:#f2f2f2"></div>
<div class="lbl" style="left:439px;top:256px">Column 2 Percent Compare Thresholds&nbsp;&nbsp; (In:92)</div>
<div class="lbl" style="left:760.5px;top:256px">0.25, 0.5, 0.75</div>
<div class="a" style="left:432px;top:286.73px;width:469px;height:1px;background:#f2f2f2"></div>
<div class="lbl" style="left:439px;top:272px">Column 3 Percent Compare Thresholds&nbsp;&nbsp; (In:93)</div>
<div class="lbl" style="left:760.5px;top:272px">0.25, 0.5, 0.75</div>
<div class="a" style="left:432px;top:303.07px;width:469px;height:1px;background:#f2f2f2"></div>
<div class="lbl" style="left:439px;top:288px">Bid/Ask Volume Text Threshold&nbsp;&nbsp; (In:94)</div>
<div class="lbl" style="left:760.5px;top:288px">0</div>
<div class="a" style="left:432px;top:319.40px;width:469px;height:1px;background:#f2f2f2"></div>
<div class="lbl" style="left:439px;top:305px">Bid/Ask Minimum Volume Compare Threshold&nbsp;&nbsp; (In:...</div>
<div class="lbl" style="left:760.5px;top:305px">0</div>
<div class="a" style="left:432px;top:335.73px;width:469px;height:1px;background:#f2f2f2"></div>
<div class="lbl" style="left:439px;top:321px">Enable Diagonal Zero Bid/Ask Compares&nbsp;&nbsp; (In:96)</div>
<div class="lbl" style="left:760.5px;top:321px">No</div>
<div class="a" style="left:432px;top:352.07px;width:469px;height:1px;background:#f2f2f2"></div>
<div class="lbl" style="left:439px;top:337px">Highlight Maximum/Minimum Value Based On&nbsp;&nbsp; (In:99)</div>
<div class="lbl" style="left:760.5px;top:337px">Automatic</div>
<div class="a" style="left:432px;top:368.40px;width:469px;height:1px;background:#f2f2f2"></div>
<div class="lbl" style="left:439px;top:354px">Candlestick Outline Width&nbsp;&nbsp; (In:100)</div>
<div class="lbl" style="left:760.5px;top:354px">2</div>
<div class="a" style="left:432px;top:384.73px;width:469px;height:1px;background:#f2f2f2"></div>
<div class="lbl" style="left:439px;top:370px">Pullback Column Right Offset in Pixels&nbsp;&nbsp; (In:101)</div>
<div class="lbl" style="left:760.5px;top:370px">0</div>
<div class="a" style="left:432px;top:385.33px;width:469px;height:16.33px;background:#f0f0f0"></div>
<div class="a" style="left:432px;top:401.07px;width:469px;height:1px;background:#f2f2f2"></div>
<div class="lbl" style="left:439px;top:386px">Volume Profile Bars Length Relative to All Visible B...</div>
<div class="lbl" style="left:760.5px;top:386px">No</div>
<div class="a" style="left:432px;top:417.40px;width:469px;height:1px;background:#f2f2f2"></div>
<div class="lbl" style="left:439px;top:403px">Use Separate Colors for Text Coloring Method&nbsp;&nbsp; (In:...</div>
<div class="lbl" style="left:760.5px;top:403px">No</div>
<div class="a" style="left:756px;top:418.50px;width:145px;height:15.03px;background:#00ff00"></div>
<div class="a" style="left:432px;top:433.73px;width:469px;height:1px;background:#f2f2f2"></div>
<div class="lbl" style="left:439px;top:419px">Range 3 Up Color for Text&nbsp;&nbsp; (In:104)</div>
<div class="lbl" style="left:760.5px;top:419px">R: 0, G: 255, B: 0</div>
<div class="a" style="left:756px;top:434.83px;width:145px;height:15.03px;background:#00d400"></div>
<div class="a" style="left:432px;top:450.06px;width:469px;height:1px;background:#f2f2f2"></div>
<div class="lbl" style="left:439px;top:435px">Range 2 Up Color for Text&nbsp;&nbsp; (In:105)</div>
<div class="lbl" style="left:760.5px;top:435px">R: 0, G: 212, B: 0</div>
<div class="a" style="left:756px;top:451.16px;width:145px;height:15.03px;background:#00aa00"></div>
<div class="a" style="left:432px;top:466.40px;width:469px;height:1px;background:#f2f2f2"></div>
<div class="lbl" style="left:439px;top:452px">Range 1 Up Color for Text&nbsp;&nbsp; (In:106)</div>
<div class="lbl" style="left:760.5px;top:452px">R: 0, G: 170, B: 0</div>
<div class="a" style="left:756px;top:467.50px;width:145px;height:15.03px;background:#007f00"></div>
<div class="a" style="left:432px;top:482.73px;width:469px;height:1px;background:#f2f2f2"></div>
<div class="lbl" style="left:439px;top:468px">Range 0 Up Color for Text&nbsp;&nbsp; (In:107)</div>
<div class="lbl" style="left:760.5px;top:468px">R: 0, G: 127, B: 0</div>
<div class="a" style="left:756px;top:483.83px;width:145px;height:15.03px;background:#7f0000"></div>
<div class="a" style="left:432px;top:499.06px;width:469px;height:1px;background:#f2f2f2"></div>
<div class="lbl" style="left:439px;top:484px">Range 0 Down Color for Text&nbsp;&nbsp; (In:108)</div>
<div class="lbl" style="left:760.5px;top:484px">R: 127, G: 0, B: 0</div>
<div class="a" style="left:756px;top:500.16px;width:145px;height:15.03px;background:#aa0000"></div>
<div class="a" style="left:432px;top:515.40px;width:469px;height:1px;background:#f2f2f2"></div>
<div class="lbl" style="left:439px;top:501px">Range 1 Down Color for Text&nbsp;&nbsp; (In:109)</div>
<div class="lbl" style="left:760.5px;top:501px">R: 170, G: 0, B: 0</div>
<div class="a" style="left:756px;top:516.50px;width:145px;height:15.03px;background:#d40000"></div>
<div class="a" style="left:432px;top:531.73px;width:469px;height:1px;background:#f2f2f2"></div>
<div class="lbl" style="left:439px;top:517px">Range 2 Down Color for Text&nbsp;&nbsp; (In:110)</div>
<div class="lbl" style="left:760.5px;top:517px">R: 212, G: 0, B: 0</div>
<div class="a" style="left:756px;top:532.83px;width:145px;height:15.03px;background:#ff0000"></div>
<div class="a" style="left:432px;top:548.06px;width:469px;height:1px;background:#f2f2f2"></div>
<div class="lbl" style="left:439px;top:533px">Range 3 Down Color for Text&nbsp;&nbsp; (In:111)</div>
<div class="lbl" style="left:760.5px;top:533px">R: 255, G: 0, B: 0</div>
<div class="a" style="left:755px;top:203px;width:1px;height:346px;background:#f2f2f2"></div>
<div class="a" style="left:901px;top:201px;width:18px;height:349px;background:#f2f2f2"></div>
<div class="sbb" style="left:901px;top:185px;width:16.5px;height:16px"></div>
<svg class="a" style="left:904px;top:188px" width="11" height="10" viewBox="0 0 11 10"><path d="M1.5 6.5L5.5 2.5L9.5 6.5" stroke="#3a3a3a" stroke-width="1.1" fill="none"/></svg>
<div class="sbb" style="left:901.5px;top:433.5px;width:16px;height:60px"></div>
<div class="sbb" style="left:901px;top:534.5px;width:16.5px;height:15px"></div>
<svg class="a" style="left:904px;top:537px" width="11" height="10" viewBox="0 0 11 10"><path d="M1.5 3L5.5 7L9.5 3" stroke="#3a3a3a" stroke-width="1.1" fill="none"/></svg>
<div class="a" style="left:431.5px;top:549px;width:487px;height:17px;background:#f2f2f2"></div>
<div class="sbb" style="left:432.5px;top:550.5px;width:15.5px;height:15px"></div>
<svg class="a" style="left:435px;top:553px" width="10" height="10" viewBox="0 0 10 10"><path d="M6.5 1.5L2.8 5L6.5 8.5" stroke="#3a3a3a" stroke-width="1.1" fill="none"/></svg>
<div class="sbb" style="left:449px;top:550.5px;width:421.5px;height:15px"></div>
<div class="sbb" style="left:885px;top:550.5px;width:16.5px;height:15px"></div>
<svg class="a" style="left:888px;top:553px" width="10" height="10" viewBox="0 0 10 10"><path d="M3.5 1.5L7.2 5L3.5 8.5" stroke="#3a3a3a" stroke-width="1.1" fill="none"/></svg>
</body></html>
